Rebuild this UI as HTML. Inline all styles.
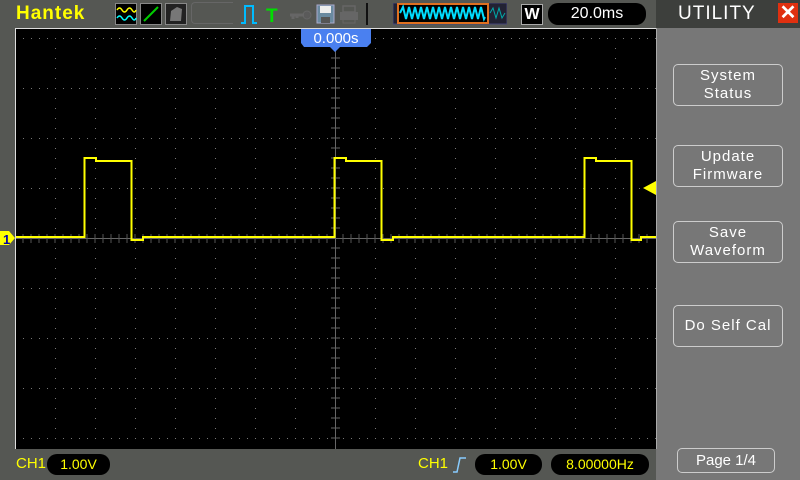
<!DOCTYPE html>
<html><head><style>
*{margin:0;padding:0;box-sizing:border-box}
body{width:800px;height:480px;background:#555753;position:relative;overflow:hidden;font-family:"Liberation Sans",sans-serif}
.abs{position:absolute}
.btn{position:absolute;left:673px;width:110px;height:42px;border:1px solid #ccc;border-radius:5px;color:#fff;font-size:15px;text-align:center;line-height:18px;letter-spacing:1px;display:flex;align-items:center;justify-content:center}
.pill{position:absolute;background:#000;border-radius:10px;color:#ff0;font-size:14px;text-align:center;height:21px;line-height:21px}
</style></head><body>
<div class="abs" style="left:16px;top:3px;color:#ff0;font-weight:bold;font-size:19px;letter-spacing:1px">Hantek</div>
<svg class="abs" style="left:115px;top:3px" width="72" height="22">
<rect x="0.5" y="0.5" width="21" height="21" fill="#000" stroke="#888"/>
<path d="M2 7 q2.5-4 5 0 t5 0 t5 0 t4 0" stroke="#ff0" fill="none" stroke-width="1.5"/>
<path d="M2 15 q2.5-4 5 0 t5 0 t5 0 t4 0" stroke="#0ff" fill="none" stroke-width="1.5"/>
<rect x="25.5" y="0.5" width="21" height="21" fill="#000" stroke="#888"/>
<path d="M29 18 L43 4" stroke="#0c0" stroke-width="2"/>
<rect x="50.5" y="0.5" width="21" height="21" fill="#222" stroke="#888"/>
<path d="M55 18 L56 8 L62 4 L67 6 L66 18 Z" fill="#777"/>
</svg>
<div class="abs" style="left:191px;top:2px;width:42px;height:22px;border:1px solid #666;border-right:none;border-radius:4px 0 0 4px"></div>
<svg class="abs" style="left:240px;top:3px" width="150" height="22">
<path d="M1 20 H5 V3 H13 V20 H17" stroke="#0bf" stroke-width="2" fill="none"/>
<text x="26" y="19" fill="#0d0" font-size="19" font-weight="bold" font-family="Liberation Sans">T</text>
<circle cx="67" cy="12" r="4" fill="#5a5a5a" stroke="#666"/><path d="M50 12 H64 M53 12 v4 M57 12 v3" stroke="#666" stroke-width="3"/>
<rect x="77" y="2" width="17" height="18" fill="#6a8aa0" stroke="#aac" />
<rect x="80" y="3" width="11" height="7" fill="#eee"/><rect x="81" y="14" width="9" height="6" fill="#555"/>
<rect x="103" y="3" width="12" height="6" fill="none" stroke="#666" stroke-width="1.5"/>
<rect x="100" y="9" width="18" height="8" fill="#666"/><rect x="103" y="15" width="12" height="5" fill="none" stroke="#666"/>
<path d="M127 0 V24" stroke="#111" stroke-width="2"/>
</svg>
<svg class="abs" style="left:393px;top:3px" width="114" height="22">
<rect x="0" y="0" width="114" height="21" fill="#223" stroke="#447"/>
<rect x="5" y="1" width="90" height="19" fill="#000" stroke="#e07020" stroke-width="2"/>
<path d="M7 10 l3-6 3 12 3-12 3 12 3-12 3 12 3-12 3 12 3-12 3 12 3-12 3 12 3-12 3 12 3-12 3 12 3-12 3 12 3-12 3 12 3-12 3 12 3-12 3 12 3-12 3 12 3-12 3 12 1-2" stroke="#0df" stroke-width="2" fill="none"/>
<path d="M97 10 l3-5 3 10 3-10 3 10 3-5" stroke="#0aa" stroke-width="1" fill="none"/>
</svg>
<div class="abs" style="left:521px;top:4px;width:22px;height:21px;background:#000;border:1px solid #aaa;color:#fff;font-weight:bold;font-size:16px;text-align:center;line-height:19px">W</div>
<div class="abs" style="left:548px;top:3px;width:98px;height:22px;background:#000;border-radius:10px;color:#fff;font-size:16px;text-align:center;line-height:22px">20.0ms</div>
<div class="abs" style="left:656px;top:0;width:144px;height:480px;background:#777"></div>
<div class="abs" style="left:656px;top:0;width:144px;height:28px;background:#3d3f3c"></div>
<div class="abs" style="left:678px;top:3px;color:#fff;font-size:19px;letter-spacing:1px">UTILITY</div>
<div class="abs" style="left:778px;top:3px;width:20px;height:20px;background:#e03010;color:#fff;font-size:20px;font-weight:bold;text-align:center;line-height:20px">✕</div>
<svg class="abs" style="left:0;top:0" width="660" height="452">
<rect x="15" y="28" width="641" height="421" fill="#000"/>
<path d="M15.5 28 V449 M15 28.5 H656" stroke="#ddd" stroke-width="1"/>
<path d="M656.5 28 V449" stroke="#aaa"/>
<g stroke="#777" stroke-width="1" stroke-dasharray="1 9" fill="none">
<path d="M55.5 48 V440 M95.5 48 V440 M135.5 48 V440 M175.5 48 V440 M215.5 48 V440 M255.5 48 V440 M295.5 48 V440 M375.5 48 V440 M415.5 48 V440 M455.5 48 V440 M495.5 48 V440 M535.5 48 V440 M575.5 48 V440 M615.5 48 V440"/>
</g>
<g stroke="#777" stroke-width="1" stroke-dasharray="1 7" fill="none">
<path d="M23 38.5 H656 M23 88.5 H656 M23 138.5 H656 M23 188.5 H656 M23 288.5 H656 M23 338.5 H656 M23 388.5 H656 M23 438.5 H656"/>
</g>
<path d="M335.5 48 V449 M16 238.5 H656" stroke="#666" stroke-width="1"/>
<path d="M331 58 H340 M331 68 H340 M331 78 H340 M331 88 H340 M331 98 H340 M331 108 H340 M331 118 H340 M331 128 H340 M331 138 H340 M331 148 H340 M331 158 H340 M331 168 H340 M331 178 H340 M331 188 H340 M331 198 H340 M331 208 H340 M331 218 H340 M331 228 H340 M331 248 H340 M331 258 H340 M331 268 H340 M331 278 H340 M331 288 H340 M331 298 H340 M331 308 H340 M331 318 H340 M331 328 H340 M331 338 H340 M331 348 H340 M331 358 H340 M331 368 H340 M331 378 H340 M331 388 H340 M331 398 H340 M331 408 H340 M331 418 H340 M331 428 H340 M331 438 H340" stroke="#666"/>
<path d="M23 234 V243 M31 234 V243 M39 234 V243 M47 234 V243 M55 234 V243 M63 234 V243 M71 234 V243 M79 234 V243 M87 234 V243 M95 234 V243 M103 234 V243 M111 234 V243 M119 234 V243 M127 234 V243 M135 234 V243 M143 234 V243 M151 234 V243 M159 234 V243 M167 234 V243 M175 234 V243 M183 234 V243 M191 234 V243 M199 234 V243 M207 234 V243 M215 234 V243 M223 234 V243 M231 234 V243 M239 234 V243 M247 234 V243 M255 234 V243 M263 234 V243 M271 234 V243 M279 234 V243 M287 234 V243 M295 234 V243 M303 234 V243 M311 234 V243 M319 234 V243 M327 234 V243 M343 234 V243 M351 234 V243 M359 234 V243 M367 234 V243 M375 234 V243 M383 234 V243 M391 234 V243 M399 234 V243 M407 234 V243 M415 234 V243 M423 234 V243 M431 234 V243 M439 234 V243 M447 234 V243 M455 234 V243 M463 234 V243 M471 234 V243 M479 234 V243 M487 234 V243 M495 234 V243 M503 234 V243 M511 234 V243 M519 234 V243 M527 234 V243 M535 234 V243 M543 234 V243 M551 234 V243 M559 234 V243 M567 234 V243 M575 234 V243 M583 234 V243 M591 234 V243 M599 234 V243 M607 234 V243 M615 234 V243 M623 234 V243 M631 234 V243 M639 234 V243 M647 234 V243" stroke="#555"/>
<g stroke="#ff0" stroke-width="2" fill="none">
<path d="M16 237 H84.5 V158 H96 V161 H131.5 V240 H143 V237 H334.5 V158 H346 V161 H381.5 V240 H393 V237 H584.5 V158 H596 V161 H631.5 V240 H641 V237 H656"/>
</g>
<path d="M301 29 H371 V43 L367 47 H340 L335 52 L330 47 H304 L301 43 Z" fill="#4a80f0"/>
<text x="336" y="43" fill="#fff" font-size="15" text-anchor="middle" font-family="Liberation Sans">0.000s</text>
<path d="M656 188 L643 188 L656 181 Z M656 188 L643 188 L656 195 Z" fill="#ff0"/>
<path d="M0 231 H9 L15 238 L9 245 H0 Z" fill="#ff0"/>
<text x="3" y="244" fill="#00a" font-size="13" font-weight="bold" font-family="Liberation Sans">1</text>
</svg>
<div class="btn" style="top:64px">System<br>Status</div>
<div class="btn" style="top:145px">Update<br>Firmware</div>
<div class="btn" style="top:221px">Save<br>Waveform</div>
<div class="btn" style="top:305px">Do Self Cal</div>
<div class="abs" style="left:677px;top:448px;width:98px;height:25px;border:1px solid #ccc;border-radius:5px;color:#fff;font-size:15px;text-align:center;line-height:23px">Page 1/4</div>
<div class="abs" style="left:16px;top:455px;color:#ff0;font-size:15px">CH1</div>
<div class="pill" style="left:47px;top:454px;width:63px">1.00V</div>
<div class="abs" style="left:418px;top:455px;color:#ff0;font-size:15px">CH1</div>
<svg class="abs" style="left:452px;top:455px" width="16" height="18"><path d="M1 17 H5 L8 3 H14" stroke="#8cf" stroke-width="1.5" fill="none"/></svg>
<div class="pill" style="left:475px;top:454px;width:67px">1.00V</div>
<div class="pill" style="left:551px;top:454px;width:98px">8.00000Hz</div>
</body></html>
